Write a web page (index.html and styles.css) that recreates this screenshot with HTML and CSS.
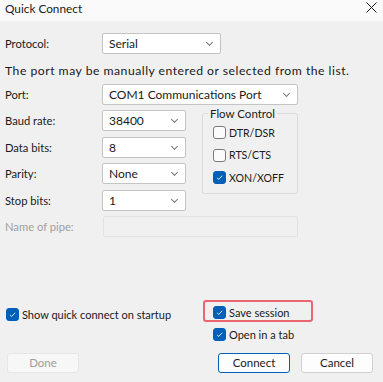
FILE: index.html
```html
<!DOCTYPE html>
<html lang="en">
<head>
    <meta charset="UTF-8">
    <title>Quick Connect</title>
    <link rel="stylesheet" href="styles.css">
</head>
<body>
    <div class="dialog">
        <div class="titlebar">
            <span class="title">Quick Connect</span>
            <svg class="close" width="11" height="11" viewBox="0 0 11 11">
                <path d="M0.5 0.5 L10.5 10.5 M10.5 0.5 L0.5 10.5" stroke="#1a1a1a" stroke-width="1" fill="none"/>
            </svg>
        </div>

        <div class="protocol-row">
            <span class="label">Protocol:</span>
            <div class="select">Serial<i class="chev"></i></div>
        </div>

        <p class="hint">The port may be manually entered or selected from the list.</p>

        <div class="form-grid">
            <span class="label r1">Port:</span>
            <div class="select port r1">COM1 Communications Port<i class="chev"></i></div>

            <span class="label r2">Baud rate:</span>
            <div class="select r2">38400<i class="chev"></i></div>

            <span class="label r3">Data bits:</span>
            <div class="select r3">8<i class="chev"></i></div>

            <span class="label r4">Parity:</span>
            <div class="select r4">None<i class="chev"></i></div>

            <span class="label r5">Stop bits:</span>
            <div class="select r5">1<i class="chev"></i></div>

            <span class="label disabled r6">Name of pipe:</span>
            <div class="input-disabled r6"></div>

            <fieldset class="flow">
                <legend>Flow Control</legend>
                <label class="check"><span class="cb"></span>DTR/DSR</label>
                <label class="check"><span class="cb"></span>RTS/CTS</label>
                <label class="check"><span class="cb on"><svg viewBox="0 0 13 13"><path d="M3.5 6.8 L5.6 8.8 L9.6 4.4" stroke="#fff" stroke-width="1" fill="none"/></svg></span>XON/XOFF</label>
            </fieldset>
        </div>

        <div class="options">
            <div class="opt-left">
                <label class="check"><span class="cb on"><svg viewBox="0 0 13 13"><path d="M3.5 6.8 L5.6 8.8 L9.6 4.4" stroke="#fff" stroke-width="1" fill="none"/></svg></span>Show quick connect on startup</label>
            </div>
            <div class="opt-right">
                <div class="highlight">
                    <label class="check"><span class="cb on"><svg viewBox="0 0 13 13"><path d="M3.5 6.8 L5.6 8.8 L9.6 4.4" stroke="#fff" stroke-width="1" fill="none"/></svg></span>Save session</label>
                </div>
                <label class="check tab"><span class="cb on"><svg viewBox="0 0 13 13"><path d="M3.5 6.8 L5.6 8.8 L9.6 4.4" stroke="#fff" stroke-width="1" fill="none"/></svg></span>Open in a tab</label>
            </div>
        </div>

        <div class="buttons">
            <button class="btn done" disabled>Done</button>
            <span class="spacer"></span>
            <button class="btn primary">Connect</button>
            <button class="btn">Cancel</button>
        </div>
    </div>
</body>
</html>
```

FILE: styles.css
```css
html, body {
    margin: 0;
    padding: 0;
}

body {
    font-family: Lato, "Noto Sans", sans-serif;
    font-size: 11.2px;
    color: #1a1a1a;
    background: #f0f0f0;
}

.dialog {
    width: 383px;
    height: 382px;
    overflow: hidden;
}

.titlebar {
    height: 21px;
    background: #fafafa;
    display: flex;
    align-items: center;
    justify-content: space-between;
    padding: 0 6px 0 5px;
}

.title {
    font-size: 11.8px;
    margin-top: -4px;
}

.close {
    margin-top: -6px;
}

.label {
    display: flex;
    align-items: center;
    padding-left: 5px;
}

.label.disabled {
    color: #a0a0a0;
}

.protocol-row {
    display: grid;
    grid-template-columns: 102px 119px;
    height: 21px;
    margin-top: 12px;
}

.select {
    position: relative;
    background: #fff;
    border: 1px solid #c4c4c4;
    border-radius: 2px;
    box-sizing: border-box;
    height: 21px;
    line-height: 19px;
    padding-left: 6px;
    font-size: 12px;
    white-space: nowrap;
}

.chev {
    position: absolute;
    right: 8px;
    top: 6px;
    width: 4px;
    height: 4px;
    border-right: 1px solid #777;
    border-bottom: 1px solid #777;
    transform: rotate(45deg);
}

.hint {
    margin: 10px 0 0 5px;
    height: 14px;
    line-height: 14px;
    font-size: 12.2px;
    letter-spacing: 0.5px;
}

.form-grid {
    display: grid;
    grid-template-columns: 102px 84px 16px 96px;
    grid-template-rows: repeat(6, 21px);
    row-gap: 5.4px;
    margin-top: 6px;
}

.r1 { grid-row: 1; }
.r2 { grid-row: 2; }
.r3 { grid-row: 3; }
.r4 { grid-row: 4; }
.r5 { grid-row: 5; }
.r6 { grid-row: 6; }

.label { grid-column: 1; }
.form-grid .select { grid-column: 2; }
.form-grid .select.port { grid-column: 2 / 5; }

.input-disabled {
    grid-column: 2 / 5;
    margin-left: 1px;
    border: 1px solid #e2e2e2;
    background: #f0f0f0;
    border-radius: 2px;
}

.flow {
    grid-column: 4;
    grid-row: 2 / 6;
    margin: -3px 0 0 0;
    height: 87px;
    box-sizing: border-box;
    border: 1px solid #dcdcdc;
    border-radius: 2px;
    padding: 6px 0 0 10px;
    display: flex;
    flex-direction: column;
    gap: 9.5px;
    min-width: 0;
}

.flow legend {
    padding: 0 2px;
    margin-left: -5px;
    line-height: 13px;
    font-size: 11.5px;
}

.flow .check {
    font-size: 10.6px;
}

.check {
    display: flex;
    align-items: center;
    gap: 3px;
    height: 13px;
    white-space: nowrap;
}

.cb {
    width: 13px;
    height: 13px;
    box-sizing: border-box;
    border: 1px solid #7a7a7a;
    border-radius: 3px;
    background: #fbfbfb;
    flex: none;
}

.cb.on {
    background: #005fb8;
    border-color: #005fb8;
}

.cb svg {
    display: block;
    width: 11px;
    height: 11px;
}

.options {
    display: flex;
    margin-top: 63px;
    font-size: 11px;
}

.opt-left {
    width: 197px;
    padding: 8px 0 0 6px;
}

.opt-right {
    display: flex;
    flex-direction: column;
}

.highlight {
    width: 110px;
    height: 22px;
    box-sizing: border-box;
    border: 2px solid #ea6670;
    border-radius: 3px;
    padding: 4px 0 0 8px;
}

.check.tab {
    margin: 6px 0 0 10px;
}

.buttons {
    display: flex;
    align-items: center;
    padding: 0 10px 0 7px;
    margin-top: 12px;
    gap: 11px;
}

.spacer {
    flex: 1;
}

.btn {
    font-family: inherit;
    font-size: 11.5px;
    width: 72px;
    height: 20px;
    padding: 0;
    border: 1px solid #d0d0d0;
    border-radius: 3px;
    background: #fdfdfd;
    color: #1a1a1a;
}

.btn.done {
    background: #f7f7f7;
    border-color: #e6e6e6;
    color: #9d9d9d;
}

.btn.primary {
    border-color: #005fb8;
}
```
